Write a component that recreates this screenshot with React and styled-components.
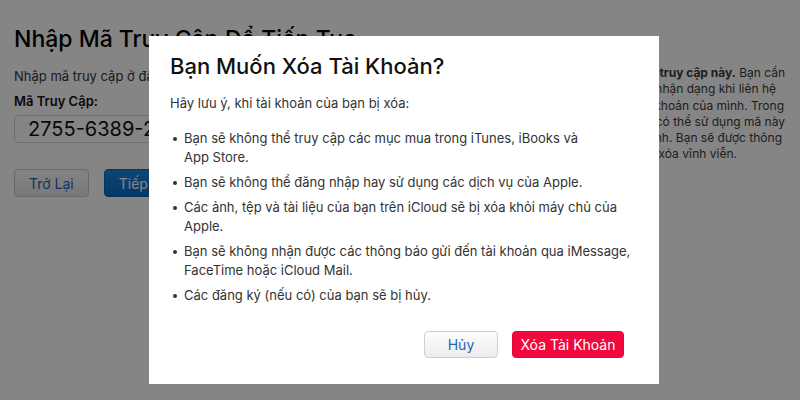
import React from 'react';
import styled, { createGlobalStyle } from 'styled-components';

const GlobalStyle = createGlobalStyle`
  html, body {
    margin: 0;
    padding: 0;
    background: #fff;
    font-family: Inter, "Noto Sans", sans-serif;
    overflow: hidden;
  }
`;

// Trang phía sau hộp thoại
const Page = styled.div`
  width: 800px;
  height: 400px;
  display: flex;
  justify-content: space-between;
  padding: 0 15px 0 14px;
  box-sizing: border-box;
  position: relative;
`;

const MainColumn = styled.div`
  width: 440px;
  padding-top: 24px;
`;

const PageTitle = styled.h1`
  margin: 0;
  font-size: 23px;
  font-weight: 500;
  color: #000;
  white-space: nowrap;
  line-height: 30px;
`;

const PageText = styled.p`
  margin: 13px 0 0;
  font-size: 13px;
  color: #333;
  line-height: 18px;
`;

const Label = styled.div`
  margin-top: 7px;
  font-size: 13px;
  font-weight: 600;
  color: #111;
  line-height: 18px;
`;

const CodeBox = styled.div`
  margin-top: 5px;
  height: 26px;
  border: 1px solid #d2d2d2;
  border-radius: 4px;
  padding-left: 13px;
  font-size: 20px;
  line-height: 26px;
  color: #111;
`;

const ButtonRow = styled.div`
  display: flex;
  gap: 15px;
  margin-top: 26px;
`;

const PageButton = styled.div`
  height: 26px;
  padding: 0 14px;
  display: flex;
  align-items: center;
  border-radius: 4px;
  font-size: 14px;
  ${(p) =>
    p.$primary
      ? `background: linear-gradient(#1a86e0, #0a6cc4); color: #fff; border: 1px solid #0863b6;`
      : `background: linear-gradient(#fbfbfb, #e8e8e8); color: #1b63b8; border: 1px solid #c9c9c9;`}
`;

const SideColumn = styled.div`
  width: 320px;
  padding-top: 65px;
  font-size: 12px;
  line-height: 16.3px;
  color: #3a3a3a;
`;

const SideLine = styled.div`
  white-space: nowrap;
  text-align: right;
  padding-right: ${(p) => p.$end || 0}px;
`;

// Lớp phủ và hộp thoại
const Overlay = styled.div`
  position: absolute;
  inset: 0;
  background: rgba(0, 0, 0, 0.48);
  display: flex;
  justify-content: center;
  align-items: flex-start;
  padding: 36px 0 0 8px;
`;

const Dialog = styled.div`
  width: 510px;
  box-sizing: border-box;
  background: #fff;
  padding: 16px 35px 26px 21px;
`;

const DialogTitle = styled.h2`
  margin: 0;
  font-size: 22px;
  font-weight: 500;
  color: #111;
  line-height: 28px;
`;

const DialogText = styled.p`
  margin: 14px 0 0;
  font-size: 13px;
  color: #333;
  line-height: 19px;
`;

const BulletList = styled.ul`
  margin: 16px -12px 0 0;
  padding: 0 0 0 14px;
  list-style: none;
`;

const Bullet = styled.li`
  position: relative;
  font-size: 13px;
  line-height: 19px;
  color: #333;
  & + & {
    margin-top: 6px;
  }
  &::before {
    content: '';
    position: absolute;
    left: -11px;
    top: 8px;
    width: 4px;
    height: 4px;
    border-radius: 50%;
    background: #333;
  }
`;

const DialogActions = styled.div`
  display: flex;
  justify-content: flex-end;
  gap: 14px;
  margin-top: 26px;
`;

const DialogButton = styled.button`
  height: 27px;
  padding: 0;
  width: ${(p) => p.$width}px;
  border-radius: 4px;
  font-family: inherit;
  font-size: 14px;
  cursor: pointer;
  ${(p) =>
    p.$danger
      ? `background: #f2083f; color: #fff; border: 1px solid #e4063a;`
      : `background: linear-gradient(#fdfdfd, #ececec); color: #2266b8; border: 1px solid #cfcfcf;`}
`;

const bullets = [
  'Bạn sẽ không thể truy cập các mục mua trong iTunes, iBooks và App\u00a0Store.',
  'Bạn sẽ không thể đăng nhập hay sử dụng các dịch vụ của Apple.',
  'Các ảnh, tệp và tài liệu của bạn trên iCloud sẽ bị xóa khỏi máy chủ của Apple.',
  'Bạn sẽ không nhận được các thông báo gửi đến tài khoản qua iMessage, FaceTime hoặc iCloud Mail.',
  'Các đăng ký (nếu có) của bạn sẽ bị hủy.',
];

const App = () => {
  return (
    <>
      <GlobalStyle />
      <Page>
        <MainColumn>
          <PageTitle>Nhập Mã Truy Cập Để Tiếp Tục</PageTitle>
          <PageText>Nhập mã truy cập ở đây để tiếp tục quá trình xóa tài khoản.</PageText>
          <Label>Mã Truy Cập:</Label>
          <CodeBox>2755-6389-2418</CodeBox>
          <ButtonRow>
            <PageButton>Trở Lại</PageButton>
            <PageButton $primary>Tiếp Tục</PageButton>
          </ButtonRow>
        </MainColumn>
        <SideColumn>
          <SideLine>
            <b>Hãy lưu giữ mã truy cập này.</b> Bạn cần
          </SideLine>
          <SideLine $end={9}>mã này để xác minh nhận dạng khi liên hệ</SideLine>
          <SideLine $end={1}>với Apple về tài khoản của mình. Trong</SideLine>
          <SideLine>thời gian này, bạn có thể sử dụng mã này</SideLine>
          <SideLine $end={3}>trong thời gian nhất định. Bạn sẽ được thông</SideLine>
          <SideLine $end={48}>báo khi tài khoản bị xóa vĩnh viễn.</SideLine>
        </SideColumn>
        <Overlay>
          <Dialog>
            <DialogTitle>Bạn Muốn Xóa Tài Khoản?</DialogTitle>
            <DialogText>Hãy lưu ý, khi tài khoản của bạn bị xóa:</DialogText>
            <BulletList>
              {bullets.map((b) => (
                <Bullet key={b}>{b}</Bullet>
              ))}
            </BulletList>
            <DialogActions>
              <DialogButton $width={74}>Hủy</DialogButton>
              <DialogButton $danger $width={112}>
                Xóa Tài Khoản
              </DialogButton>
            </DialogActions>
          </Dialog>
        </Overlay>
      </Page>
    </>
  );
};

export default App;
